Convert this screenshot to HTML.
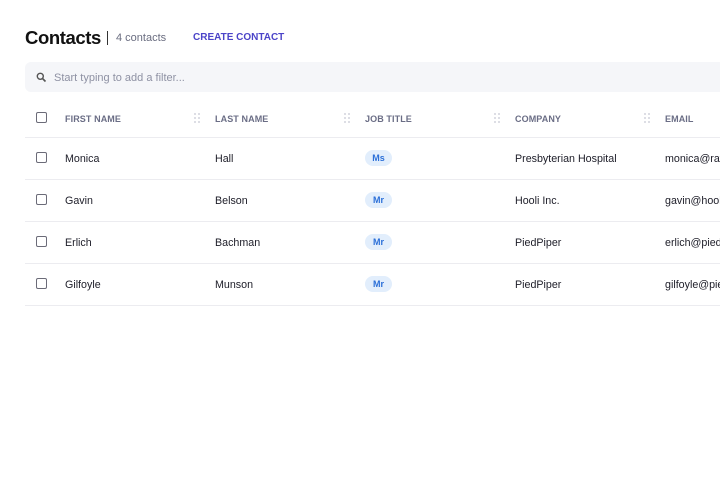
<!DOCTYPE html>
<html><head><style>
*{box-sizing:border-box;margin:0;padding:0}
html,body{width:720px;height:484px;overflow:hidden}
body{background:#fff;font-family:"Liberation Sans",sans-serif;color:#1a1a24;position:relative}
#w{position:absolute;left:0;top:0;width:720px;height:484px;overflow:hidden}
.t{position:absolute;white-space:nowrap}
.cb{position:absolute;left:36px;width:11px;height:11px;border:1.3px solid #6b6b78;border-radius:2px}
.h{font-size:9px;font-weight:bold;color:#6a6d85;letter-spacing:.1px}
.c{font-size:10.7px;color:#1d1d28}
.line{position:absolute;left:25px;width:695px;height:1px;background:#ececf0}
.dr{position:absolute;width:6px;height:10px}
.bd{position:absolute;left:365px;width:27px;height:16px;border-radius:8px;background:#e2eefc;color:#2b6fd8;font-size:9px;font-weight:bold;display:flex;align-items:center;justify-content:center}
</style></head><body><div id="w">
<div class="t" style="left:25px;top:27px;font-size:18.5px;font-weight:bold;letter-spacing:-.4px;color:#111">Contacts</div>
<div class="t" style="left:107px;top:31px;width:1px;height:14px;background:#333"></div>
<div class="t" style="left:116px;top:32px;font-size:11px;color:#6a6d80">4 contacts</div>
<div class="t" style="left:193px;top:32px;font-size:10px;font-weight:bold;color:#4b44c8">CREATE CONTACT</div>
<div class="t" style="left:25px;top:62px;width:700px;height:30px;background:#f5f6f9;border-radius:6px"></div>
<svg class="t" style="left:36px;top:72px" width="11" height="11" viewBox="0 0 11 11"><circle cx="4.3" cy="4.3" r="3" fill="none" stroke="#555" stroke-width="1.4"/><path d="M6.5 6.5L9.5 9.5" stroke="#555" stroke-width="1.6"/></svg>
<div class="t" style="left:54px;top:72px;font-size:11px;color:#8e91a3">Start typing to add a filter...</div>
<div class="cb" style="top:112px"></div>
<div class="t h" style="left:65px;top:114px">FIRST NAME</div>
<div class="t h" style="left:215px;top:114px">LAST NAME</div>
<div class="t h" style="left:365px;top:114px">JOB TITLE</div>
<div class="t h" style="left:515px;top:114px">COMPANY</div>
<div class="t h" style="left:665px;top:114px">EMAIL</div>
<svg class="dr" style="left:194px;top:113px" viewBox="0 0 6 10"><g fill="#c4c6d2"><circle cx="1" cy="1" r=".9"/><circle cx="5" cy="1" r=".9"/><circle cx="1" cy="5" r=".9"/><circle cx="5" cy="5" r=".9"/><circle cx="1" cy="9" r=".9"/><circle cx="5" cy="9" r=".9"/></g></svg>
<svg class="dr" style="left:344px;top:113px" viewBox="0 0 6 10"><g fill="#c4c6d2"><circle cx="1" cy="1" r=".9"/><circle cx="5" cy="1" r=".9"/><circle cx="1" cy="5" r=".9"/><circle cx="5" cy="5" r=".9"/><circle cx="1" cy="9" r=".9"/><circle cx="5" cy="9" r=".9"/></g></svg>
<svg class="dr" style="left:494px;top:113px" viewBox="0 0 6 10"><g fill="#c4c6d2"><circle cx="1" cy="1" r=".9"/><circle cx="5" cy="1" r=".9"/><circle cx="1" cy="5" r=".9"/><circle cx="5" cy="5" r=".9"/><circle cx="1" cy="9" r=".9"/><circle cx="5" cy="9" r=".9"/></g></svg>
<svg class="dr" style="left:644px;top:113px" viewBox="0 0 6 10"><g fill="#c4c6d2"><circle cx="1" cy="1" r=".9"/><circle cx="5" cy="1" r=".9"/><circle cx="1" cy="5" r=".9"/><circle cx="5" cy="5" r=".9"/><circle cx="1" cy="9" r=".9"/><circle cx="5" cy="9" r=".9"/></g></svg>
<div class="line" style="top:137px"></div>

<div class="cb" style="top:152px"></div>
<div class="t c" style="left:65px;top:153px">Monica</div>
<div class="t c" style="left:215px;top:153px">Hall</div>
<div class="bd" style="top:150px">Ms</div>
<div class="t c" style="left:515px;top:153px">Presbyterian Hospital</div>
<div class="t c" style="left:665px;top:153px">monica@raviga.com</div>
<div class="line" style="top:179px"></div>

<div class="cb" style="top:194px"></div>
<div class="t c" style="left:65px;top:195px">Gavin</div>
<div class="t c" style="left:215px;top:195px">Belson</div>
<div class="bd" style="top:192px">Mr</div>
<div class="t c" style="left:515px;top:195px">Hooli Inc.</div>
<div class="t c" style="left:665px;top:195px">gavin@hooli.com</div>
<div class="line" style="top:221px"></div>

<div class="cb" style="top:236px"></div>
<div class="t c" style="left:65px;top:237px">Erlich</div>
<div class="t c" style="left:215px;top:237px">Bachman</div>
<div class="bd" style="top:234px">Mr</div>
<div class="t c" style="left:515px;top:237px">PiedPiper</div>
<div class="t c" style="left:665px;top:237px">erlich@piedpiper.com</div>
<div class="line" style="top:263px"></div>

<div class="cb" style="top:278px"></div>
<div class="t c" style="left:65px;top:279px">Gilfoyle</div>
<div class="t c" style="left:215px;top:279px">Munson</div>
<div class="bd" style="top:276px">Mr</div>
<div class="t c" style="left:515px;top:279px">PiedPiper</div>
<div class="t c" style="left:665px;top:279px">gilfoyle@piedpiper.com</div>
<div class="line" style="top:305px"></div>
</div></body></html>
